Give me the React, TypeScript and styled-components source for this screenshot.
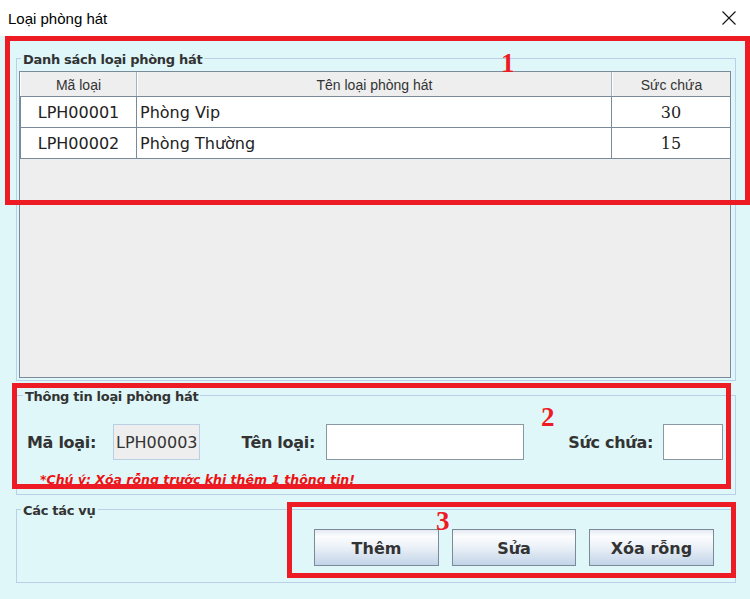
import React from "react";
import styled, { createGlobalStyle } from "styled-components";

const GlobalStyle = createGlobalStyle`
  html, body { margin: 0; padding: 0; background: #ffffff; }
  body { font-family: "DejaVu Sans", "Liberation Sans", sans-serif; }
  * { box-sizing: border-box; }
`;

const Window = styled.div`
  position: relative;
  width: 750px;
  height: 599px;
  overflow: hidden;
  background: #dff7f9;
  display: flex;
  flex-direction: column;
`;

const TitleBar = styled.div`
  height: 36px;
  flex: none;
  background: #ffffff;
  display: flex;
  align-items: center;
  justify-content: space-between;
  padding: 0 14px 0 8px;
`;

const Title = styled.span`
  font-family: "Liberation Sans", Arial, sans-serif;
  font-size: 15px;
  color: #000000;
`;

const CloseBtn = styled.span`
  display: flex;
  width: 14px;
  height: 14px;
  margin-bottom: 1px;
`;

const Body = styled.div`
  flex: 1;
  display: flex;
  flex-direction: column;
  padding: 12px 14px 0 16px;
`;

const Group = styled.fieldset<{ $mt?: number }>`
  margin: ${(p) => p.$mt ?? 0}px 0 0 0;
  padding: 0;
  min-width: 0;
  width: 720px;
  border: 1px solid #b8d0e8;
`;

const Legend = styled.legend<{ $ml: number }>`
  margin-left: ${(p) => p.$ml}px;
  padding: 4px 2px 0 2px;
  font-family: "DejaVu Sans", Tahoma, sans-serif;
  font-weight: bold;
  font-size: 13px;
  letter-spacing: -0.3px;
  line-height: 16px;
  color: #333333;
`;

const GroupInner = styled.div<{ $pad: string }>`
  padding: ${(p) => p.$pad};
`;

const TableFrame = styled.div`
  width: 712px;
  height: 307px;
  border: 1px solid #7a8a99;
  background: #eeeeee;
  display: flex;
  flex-direction: column;
`;

const HeaderRow = styled.div`
  display: grid;
  grid-template-columns: 117px 475px 1fr;
  height: 25px;
  border-bottom: 1px solid #7a8a99;
  background: #eeeeee;
`;

const HeaderCell = styled.div<{ $last?: boolean }>`
  display: flex;
  align-items: center;
  justify-content: center;
  padding-top: 1px;
  font-family: "Liberation Sans", Arial, sans-serif;
  font-size: 14px;
  color: #333333;
  border-right: ${(p) => (p.$last ? "none" : "1px solid #a7b2bd")};
  border-left: 1px solid #ffffff;
`;

const BodyRow = styled.div`
  display: grid;
  grid-template-columns: 117px 475px 1fr;
  height: 31px;
  border-bottom: 1px solid #7a8a99;
  background: #ffffff;
`;

const Cell = styled.div<{ $align: "left" | "center"; $serif?: boolean; $last?: boolean }>`
  display: flex;
  align-items: center;
  justify-content: ${(p) => (p.$align === "left" ? "flex-start" : "center")};
  padding-left: ${(p) => (p.$align === "left" ? "3px" : "0")};
  padding-top: 1px;
  font-family: ${(p) => (p.$serif ? '"DejaVu Serif", serif' : '"DejaVu Sans", Tahoma, sans-serif')};
  font-size: 16px;
  color: #222222;
  border-right: ${(p) => (p.$last ? "none" : "1px solid #7a8a99")};
  border-left: ${(p) => (p.$align === "center" && !p.$serif ? "1px solid #7a8a99" : "none")};
  white-space: nowrap;
`;

const FormRow = styled.div`
  display: grid;
  grid-template-columns: 86px 87px 126px 198px 139px 60px;
  align-items: center;
  height: 36px;
  padding-left: 10px;
`;

const Label = styled.label<{ $pr?: number; $end?: boolean }>`
  justify-self: ${(p) => (p.$end ? "end" : "start")};
  padding-right: ${(p) => p.$pr ?? 0}px;
  font-family: "DejaVu Sans", Tahoma, sans-serif;
  font-weight: bold;
  font-size: 16px;
  letter-spacing: -0.3px;
  color: #333333;
  white-space: nowrap;
`;

const TextInput = styled.input<{ $locked?: boolean }>`
  width: 100%;
  height: 36px;
  margin: 0;
  padding: 0 2px;
  outline: none;
  font-family: "DejaVu Sans", Tahoma, sans-serif;
  font-size: 16px;
  color: #333333;
  background: ${(p) => (p.$locked ? "#eeeeee" : "#ffffff")};
  border: 1px solid ${(p) => (p.$locked ? "#b8cfe5" : "#8a98a6")};
`;

const Note = styled.div`
  margin-top: 12px;
  padding-left: 23px;
  height: 16px;
  line-height: 16px;
  font-family: "DejaVu Sans", Tahoma, sans-serif;
  font-weight: bold;
  font-style: italic;
  font-size: 12.5px;
  color: #ee1111;
  white-space: nowrap;
`;

const ButtonRow = styled.div`
  display: flex;
  justify-content: flex-end;
  gap: 13px;
  padding-right: 21px;
`;

const ActionButton = styled.button<{ $w: number }>`
  width: ${(p) => p.$w}px;
  height: 37px;
  margin: 0;
  padding: 1px 0 0 0;
  border: 1px solid #7a8a99;
  background: linear-gradient(#e4eaf1 0%, #fbfcfe 18%, #eef3f9 45%, #d6e2ef 75%, #c2d4e9 100%);
  font-family: "DejaVu Sans", Tahoma, sans-serif;
  font-weight: bold;
  font-size: 16px;
  color: #333333;
  cursor: pointer;
`;

const AnnoBox = styled.div<{ $x: number; $y: number; $w: number; $h: number }>`
  position: absolute;
  left: ${(p) => p.$x}px;
  top: ${(p) => p.$y}px;
  width: ${(p) => p.$w}px;
  height: ${(p) => p.$h}px;
  border: 5px solid #ed1c24;
  pointer-events: none;
`;

const AnnoNum = styled.div<{ $x: number; $y: number }>`
  position: absolute;
  left: ${(p) => p.$x}px;
  top: ${(p) => p.$y}px;
  font-family: "Liberation Serif", "Times New Roman", serif;
  font-weight: bold;
  font-size: 27px;
  line-height: 27px;
  color: #ed1c24;
  pointer-events: none;
`;

const rows = [
  { id: "LPH00001", name: "Phòng Vip", cap: "30" },
  { id: "LPH00002", name: "Phòng Thường", cap: "15" },
];

export default function App() {
  return (
    <>
      <GlobalStyle />
      <Window>
        <TitleBar>
          <Title>Loại phòng hát</Title>
          <CloseBtn>
            <svg width="14" height="14" viewBox="0 0 14 14">
              <path d="M0.5 0.5 L13.5 13.5 M13.5 0.5 L0.5 13.5" stroke="#111" strokeWidth="1.1" fill="none" />
            </svg>
          </CloseBtn>
        </TitleBar>
        <Body>
          <Group>
            <Legend $ml={4}>Danh sách loại phòng hát</Legend>
            <GroupInner $pad="3px 4px 2px 2px">
              <TableFrame>
                <HeaderRow>
                  <HeaderCell>Mã loại</HeaderCell>
                  <HeaderCell>Tên loại phòng hát</HeaderCell>
                  <HeaderCell $last>Sức chứa</HeaderCell>
                </HeaderRow>
                {rows.map((r) => (
                  <BodyRow key={r.id}>
                    <Cell $align="center">{r.id}</Cell>
                    <Cell $align="left">{r.name}</Cell>
                    <Cell $align="center" $serif $last>
                      {r.cap}
                    </Cell>
                  </BodyRow>
                ))}
              </TableFrame>
            </GroupInner>
          </Group>

          <Group $mt={4}>
            <Legend $ml={6}>Thông tin loại phòng hát</Legend>
            <GroupInner $pad="19px 0 6px 0">
              <FormRow>
                <Label>Mã loại:</Label>
                <TextInput $locked readOnly value="LPH00003" />
                <Label $end $pr={11}>Tên loại:</Label>
                <TextInput defaultValue="" />
                <Label $end $pr={10}>Sức chứa:</Label>
                <TextInput defaultValue="" />
              </FormRow>
              <Note>*Chú ý: Xóa rỗng trước khi thêm 1 thông tin!</Note>
            </GroupInner>
          </Group>

          <Group $mt={4}>
            <Legend $ml={4}>Các tác vụ</Legend>
            <GroupInner $pad="10px 0 16px 0">
              <ButtonRow>
                <ActionButton $w={125}>Thêm</ActionButton>
                <ActionButton $w={124}>Sửa</ActionButton>
                <ActionButton $w={125}>Xóa rỗng</ActionButton>
              </ButtonRow>
            </GroupInner>
          </Group>
        </Body>

        <AnnoBox $x={5} $y={36} $w={745} $h={169} />
        <AnnoNum $x={501} $y={50}>1</AnnoNum>
        <AnnoBox $x={12} $y={383} $w={719} $h={106} />
        <AnnoNum $x={541} $y={404}>2</AnnoNum>
        <AnnoBox $x={287} $y={502} $w={449} $h={76} />
        <AnnoNum $x={436} $y={508}>3</AnnoNum>
      </Window>
    </>
  );
}
